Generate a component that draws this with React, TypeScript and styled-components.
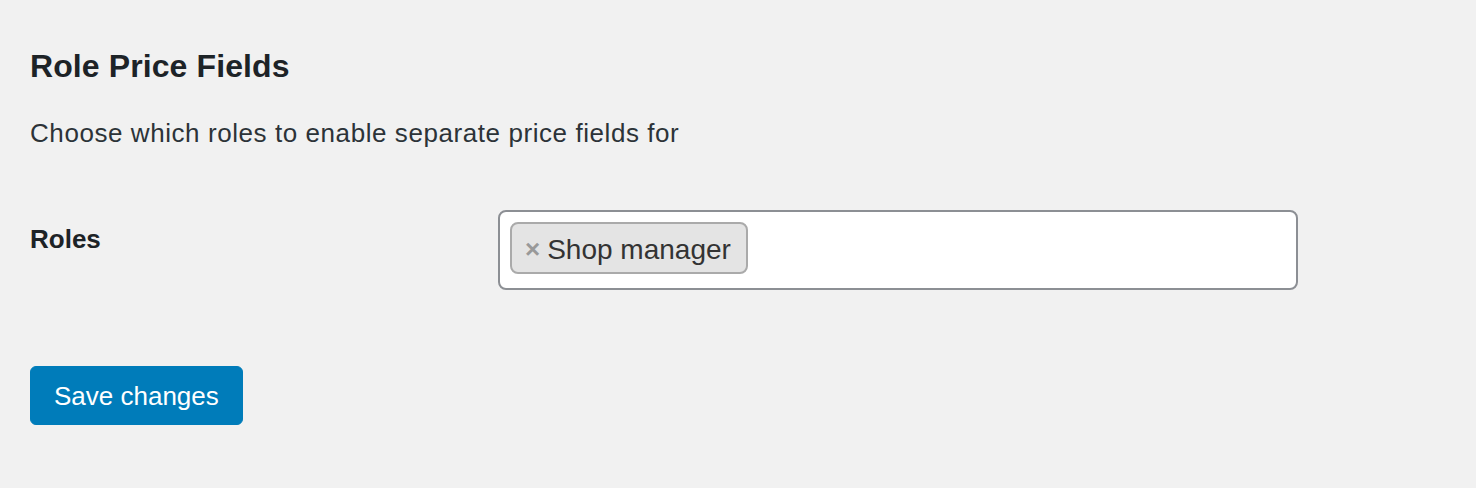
import React from "react";
import styled, { createGlobalStyle } from "styled-components";

const GlobalStyle = createGlobalStyle`
  html, body {
    margin: 0;
    padding: 0;
    background: #f1f1f1;
  }
  body {
    font-family: "Liberation Sans", Arial, sans-serif;
    color: #3c434a;
  }
`;

const Page = styled.div`
  width: 1476px;
  height: 488px;
  box-sizing: border-box;
  padding: 46px 30px 0 30px;
  background: #f1f1f1;
`;

const Heading = styled.h2`
  margin: 0;
  font-size: 32px;
  line-height: 40px;
  font-weight: 700;
  color: #1d2327;
  letter-spacing: 0.1px;
`;

const Description = styled.p`
  margin: 29px 0 0 0;
  font-size: 26px;
  line-height: 36px;
  color: #2c3338;
  letter-spacing: 0.57px;
`;

const FormRow = styled.div`
  display: grid;
  grid-template-columns: 468px 800px;
  align-items: start;
  margin-top: 59px;
`;

const Label = styled.label`
  padding-top: 11px;
  font-size: 26px;
  line-height: 36px;
  font-weight: 700;
  color: #1d2327;
`;

const SelectBox = styled.div`
  box-sizing: border-box;
  height: 80px;
  background: #ffffff;
  border: 2px solid #8c8f94;
  border-radius: 8px;
  padding: 10px;
  display: flex;
  align-items: flex-start;
  gap: 10px;
`;

const Tag = styled.span`
  box-sizing: border-box;
  height: 52px;
  display: inline-flex;
  align-items: center;
  padding: 3px 15px 0 13px;
  background: #e4e4e4;
  border: 2px solid #aaaaaa;
  border-radius: 8px;
  font-size: 28px;
  line-height: 45px;
  color: #333333;
`;

const Remove = styled.span`
  font-size: 26px;
  font-weight: 700;
  color: #999999;
  margin-right: 7px;
  line-height: 45px;
`;

const Actions = styled.div`
  margin-top: 76px;
`;

const Button = styled.button`
  box-sizing: border-box;
  height: 59px;
  padding: 2px 23px 0 23px;
  background: #007cba;
  border: 1px solid #007cba;
  border-radius: 6px;
  color: #ffffff;
  font-family: "Liberation Sans", Arial, sans-serif;
  font-size: 26px;
  line-height: 55px;
  cursor: pointer;
`;

export default function App() {
  return (
    <>
      <GlobalStyle />
      <Page>
        <Heading>Role Price Fields</Heading>
        <Description>Choose which roles to enable separate price fields for</Description>
        <FormRow>
          <Label>Roles</Label>
          <SelectBox>
            <Tag>
              <Remove>×</Remove>
              Shop manager
            </Tag>
          </SelectBox>
        </FormRow>
        <Actions>
          <Button type="button">Save changes</Button>
        </Actions>
      </Page>
    </>
  );
}
